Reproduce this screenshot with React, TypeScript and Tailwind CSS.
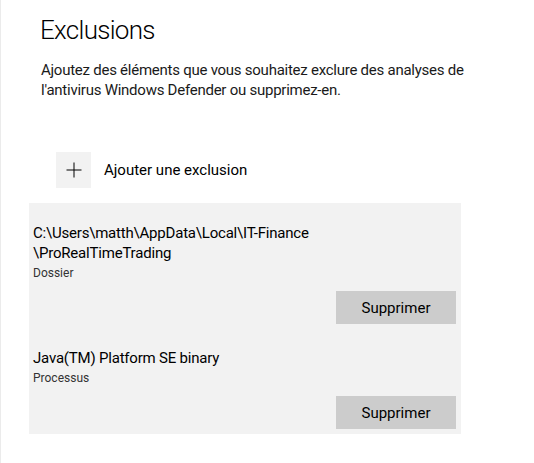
export default function App() {
  const items = [
    { lines: ["C:\\Users\\matth\\AppData\\Local\\IT-Finance", "\\ProRealTimeTrading"], kind: "Dossier" },
    { lines: ["Java(TM) Platform SE binary"], kind: "Processus" },
  ];

  return (
    <div className="h-[463px] w-[534px] overflow-hidden border-l border-[#ebebeb] bg-white font-['Roboto',sans-serif] text-black">
      {/* Header */}
      <div className="pl-[39px] pt-[13px]">
        <h1 className="text-[26px] font-light leading-[34px] tracking-[-0.7px]">Exclusions</h1>
        <p className="mt-[13px] pl-[1px] text-[15px] leading-[20px] tracking-[-0.25px] text-[#1a1a1a]">
          Ajoutez des éléments que vous souhaitez exclure des analyses de
          <br />
          l'antivirus Windows Defender ou supprimez-en.
        </p>
      </div>

      {/* Add exclusion */}
      <button className="ml-[55px] mt-[52px] flex items-center gap-[13px]">
        <span className="flex h-[36px] w-[35px] items-center justify-center bg-[#f2f2f2]">
          <svg width="16" height="16" viewBox="0 0 16 16" fill="none" stroke="#000" strokeWidth="1">
            <path d="M8 0.5v15M0.5 8h15" />
          </svg>
        </span>
        <span className="text-[15px] leading-[20px]">Ajouter une exclusion</span>
      </button>

      {/* List */}
      <div className="ml-[28px] mt-[15px] w-[432px] bg-[#f2f2f2] pb-[5px] pt-[20px]">
        {items.map((item, i) => (
          <div key={i} className={i > 0 ? "mt-[24px]" : ""}>
            <div className="pl-[4px] text-[15px] leading-[20px] tracking-[-0.2px]">
              {item.lines.map((l) => (
                <div key={l}>{l}</div>
              ))}
            </div>
            <div className="pl-[4px] pt-[2px] text-[12px] leading-[16px] text-[#333]">{item.kind}</div>
            <div className="mt-[10px] flex justify-end pr-[5px]">
              <button className="h-[33px] w-[120px] bg-[#cccccc] text-[15px] leading-[20px]">Supprimer</button>
            </div>
          </div>
        ))}
      </div>
    </div>
  );
}
